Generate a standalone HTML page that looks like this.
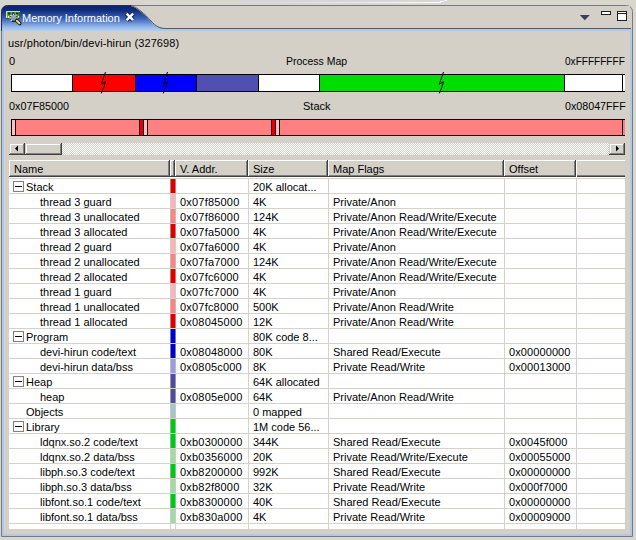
<!DOCTYPE html>
<html><head><meta charset="utf-8"><style>
html,body{margin:0;padding:0;}
body{width:636px;height:540px;position:relative;overflow:hidden;background:#d9d6ce;font-family:"Liberation Sans",sans-serif;font-size:11px;color:#000;}
.a{position:absolute;}
.t{position:absolute;white-space:nowrap;line-height:12px;height:12px;}
</style></head><body>
<svg class="a" style="left:0;top:0" width="636" height="540" viewBox="0 0 636 540">
<defs><linearGradient id="tg" x1="0" y1="0" x2="0" y2="1">
<stop offset="0" stop-color="#0a226a"/><stop offset="0.15" stop-color="#0e2a78"/><stop offset="0.5" stop-color="#3a62b8"/><stop offset="0.85" stop-color="#98bcec"/><stop offset="1" stop-color="#b4d0f0"/></linearGradient>
<linearGradient id="wl" x1="0" y1="0" x2="1" y2="0"><stop offset="0" stop-color="#fff" stop-opacity="0"/><stop offset="0.6" stop-color="#fff" stop-opacity="0.5"/><stop offset="1" stop-color="#fff" stop-opacity="1"/></linearGradient></defs>
<rect x="230" y="2" width="211" height="1" fill="url(#wl)"/><rect x="440" y="1" width="4" height="1" fill="#fff" fill-opacity="0.8"/><rect x="444" y="0" width="3" height="1" fill="#fff" fill-opacity="0.7"/>
<!-- outer frame -->
<path d="M1.5,536.5 L1.5,11.5 A6,6 0 0 1 7.5,5.5 L626.5,5.5 A6,6 0 0 1 632.5,11.5 L632.5,536.5 Z" fill="#d4d0c8" stroke="#767a86" stroke-width="1"/>
<!-- tab gradient -->
<path d="M2,31 L2,11 Q2,6 7,6 L131,6 C137,7.5 145,14.5 151,21.5 C156,27 160,28.5 166,28.5 L630,28 L630,31 Z" fill="url(#tg)"/>
<path d="M131,5.5 C137,7 145,14 151,21 C156,26.5 160,28.5 166,28.5 L631,28.5" fill="none" stroke="#5a5a5a" stroke-width="1"/>
<path d="M164,28 L630,28 L630,6 L131,6 C137,7.5 145,14.5 151,21.5 C156,27 160,28.5 166,28.5 Z" fill="#d4d0c8"/>
<path d="M131,5.5 C137,7 145,14 151,21 C156,26.5 160,28.5 166,28.5 L631,28.5" fill="none" stroke="#5a5a5a" stroke-width="1"/>
<rect x="164" y="29" width="467" height="2" fill="#aecae8"/>
<path d="M1.5,31 L1.5,11.5 A6,6 0 0 1 7.5,5.5 L131,5.5" fill="none" stroke="#0c1c58" stroke-width="1" stroke-opacity="0.8"/>
<!-- light blue inner borders -->
<rect x="2" y="29" width="2" height="507" fill="#aecae8"/>
<rect x="630" y="29" width="2" height="507" fill="#aecae8"/>
<rect x="2" y="534" width="630" height="2" fill="#aecae8"/>
</svg>
<div class="t" style="left:22px;top:12px;color:#fff;">Memory Information</div>
<svg class="a" style="left:124px;top:11px" width="12" height="12" viewBox="0 0 12 12">
<path d="M2.6,2.7 L9.1,9.2 M9.1,2.7 L2.6,9.2" stroke="#0a1a50" stroke-width="4.4"/>
<path d="M2.6,2.7 L9.1,9.2 M9.1,2.7 L2.6,9.2" stroke="#fff" stroke-width="2.6"/>
</svg>
<svg class="a" style="left:0;top:0" width="26" height="28" viewBox="0 0 26 28">
<rect x="6" y="11" width="14" height="8" fill="#5c9c42"/>
<rect x="6" y="11" width="14" height="1" fill="#c4eca0"/>
<rect x="6" y="11" width="1" height="7" fill="#c4eca0"/>
<rect x="19" y="12" width="1" height="7" fill="#2e6a22"/>
<rect x="6" y="18" width="14" height="1" fill="#2e6a22"/>
<rect x="8" y="12.5" width="2.5" height="2" fill="#0e3a10"/>
<rect x="12" y="12.5" width="2.5" height="2" fill="#0e3a10"/>
<rect x="16" y="12.5" width="2.5" height="2" fill="#0e3a10"/>
<rect x="6" y="16" width="1.2" height="2" fill="#f4eca8"/>
<rect x="8" y="16" width="1.2" height="2" fill="#f4eca8"/>
<rect x="18" y="16" width="1.2" height="1.5" fill="#f4eca8"/>
<circle cx="13.6" cy="17.6" r="3.4" fill="#a8b4cc" fill-opacity="0.7" stroke="#e8ecf4" stroke-width="1.1"/>
<circle cx="13.6" cy="17.6" r="3.4" fill="none" stroke="#202838" stroke-width="1.1" stroke-dasharray="1.3 1.4"/>
<path d="M11.8,21.3 L15.4,21.3" stroke="#101420" stroke-width="1.2"/>
<path d="M16.8,20.6 L19.8,23.6" stroke="#181408" stroke-width="3.6" stroke-linecap="round"/>
<path d="M16.9,20.7 L19.5,23.3" stroke="#ecd488" stroke-width="2" stroke-linecap="round"/>
</svg>
<svg class="a" style="left:576px;top:8px" width="56" height="18" viewBox="0 0 56 18">
<path d="M3.8,7 L13.8,7 L8.8,12.3 Z" fill="#3c3c5c"/>
<rect x="25.5" y="3.5" width="9" height="3" fill="#fff" stroke="#202020" stroke-width="1"/>
<rect x="41.5" y="3.5" width="9" height="9" fill="#fff" stroke="#202020" stroke-width="1"/>
<rect x="41" y="5" width="10" height="1" fill="#202020"/>
</svg>
<div class="t" style="left:8px;top:37px;letter-spacing:0.09px;">usr/photon/bin/devi-hirun (327698)</div>
<div class="t" style="left:9px;top:55px;">0</div>
<div class="t" style="left:286px;top:55px;"><span style="display:inline-block;transform:scaleX(0.952);transform-origin:0 0">Process Map</span></div>
<div class="t" style="left:565px;top:55px;"><span style="display:inline-block;transform:scaleX(0.915);transform-origin:0 0">0xFFFFFFFF</span></div>
<svg class="a" style="left:0;top:71px" width="636" height="24" viewBox="0 71 636 24">
<rect x="11" y="74" width="614" height="18" fill="#000"/>
<rect x="12" y="75" width="60" height="16" fill="#fff"/>
<rect x="73" y="75" width="62" height="16" fill="#ff0000"/>
<rect x="136" y="75" width="60" height="16" fill="#0000ff"/>
<rect x="197" y="75" width="61" height="16" fill="#5050b0"/>
<rect x="259" y="75" width="60" height="16" fill="#fff"/>
<rect x="320" y="75" width="244" height="16" fill="#00dd00"/>
<rect x="565" y="75" width="57" height="16" fill="#fff"/>
<rect x="623" y="75" width="2" height="16" fill="#fff"/>
<path d="M105.5,72 L102.5,80.7 L101.3,84.3 L105.5,81.7 L103.7,87.7 L101.3,93.4" fill="none" stroke="#000" stroke-width="1"/>
<path d="M167.5,72 L164.5,80.7 L163.3,84.3 L167.5,81.7 L165.7,87.7 L163.3,93.4" fill="none" stroke="#000" stroke-width="1"/>
<path d="M443.5,72 L440.5,80.7 L439.3,84.3 L443.5,81.7 L441.7,87.7 L439.3,93.4" fill="none" stroke="#000" stroke-width="1"/>
</svg>
<div class="t" style="left:9px;top:100px;"><span style="display:inline-block;transform:scaleX(0.981);transform-origin:0 0">0x07F85000</span></div>
<div class="t" style="left:303px;top:100px;">Stack</div>
<div class="t" style="left:565px;top:100px;"><span style="display:inline-block;transform:scaleX(0.973);transform-origin:0 0">0x08047FFF</span></div>
<svg class="a" style="left:0;top:116px" width="636" height="23" viewBox="0 116 636 23">
<rect x="11" y="119" width="614" height="17" fill="#000"/>
<rect x="12" y="120" width="3" height="15" fill="#ffc0c0"/>
<rect x="16" y="120" width="123" height="15" fill="#ff8080"/>
<rect x="140" y="120" width="3" height="15" fill="#e80000"/>
<rect x="144" y="120" width="3" height="15" fill="#ffc0c0"/>
<rect x="148" y="120" width="123" height="15" fill="#ff8080"/>
<rect x="272" y="120" width="3" height="15" fill="#e80000"/>
<rect x="276" y="120" width="3" height="15" fill="#ffc0c0"/>
<rect x="280" y="120" width="342" height="15" fill="#ff8080"/>
<rect x="623" y="120" width="2" height="15" fill="#ff8080"/>
</svg>
<div class="a" style="left:25px;top:143px;width:584px;height:12px;background-color:#fff;background-image:linear-gradient(45deg,#d4d0c8 25%,transparent 25%,transparent 75%,#d4d0c8 75%),linear-gradient(45deg,#d4d0c8 25%,transparent 25%,transparent 75%,#d4d0c8 75%);background-size:2px 2px;background-position:0 0,1px 1px;"></div>
<div class="a" style="left:9px;top:143px;width:16px;height:12px;background:#d4d0c8;box-shadow:inset -1px -1px 0 #404040, inset 1px 1px 0 #d4d0c8, inset -2px -2px 0 #808080, inset 2px 2px 0 #fff;"></div>
<div class="a" style="left:25px;top:143px;width:37px;height:12px;background:#d4d0c8;box-shadow:inset -1px -1px 0 #404040, inset 1px 1px 0 #d4d0c8, inset -2px -2px 0 #808080, inset 2px 2px 0 #fff;"></div>
<div class="a" style="left:609px;top:143px;width:16px;height:12px;background:#d4d0c8;box-shadow:inset -1px -1px 0 #404040, inset 1px 1px 0 #d4d0c8, inset -2px -2px 0 #808080, inset 2px 2px 0 #fff;"></div>
<svg class="a" style="left:9px;top:143px" width="16" height="12"><path d="M6,5.5 L9,2.5 L9,8.5 Z" fill="#000"/></svg>
<svg class="a" style="left:609px;top:143px" width="16" height="12"><path d="M10,5.5 L7,2.5 L7,8.5 Z" fill="#000"/></svg>
<div class="a" style="left:9px;top:177px;width:616px;height:352px;background:#fff;"></div>
<div class="a" style="left:9px;top:160px;width:161px;height:17px;background:#d4d0c8;box-shadow:inset -1px -1px 0 #404040, inset 1px 1px 0 #fff, inset -2px -2px 0 #808080;"></div>
<div class="a" style="left:170px;top:160px;width:5px;height:17px;background:#d4d0c8;box-shadow:inset -1px -1px 0 #404040, inset 1px 1px 0 #fff, inset -2px -2px 0 #808080;"></div>
<div class="a" style="left:175px;top:160px;width:73px;height:17px;background:#d4d0c8;box-shadow:inset -1px -1px 0 #404040, inset 1px 1px 0 #fff, inset -2px -2px 0 #808080;"></div>
<div class="a" style="left:248px;top:160px;width:80px;height:17px;background:#d4d0c8;box-shadow:inset -1px -1px 0 #404040, inset 1px 1px 0 #fff, inset -2px -2px 0 #808080;"></div>
<div class="a" style="left:328px;top:160px;width:176px;height:17px;background:#d4d0c8;box-shadow:inset -1px -1px 0 #404040, inset 1px 1px 0 #fff, inset -2px -2px 0 #808080;"></div>
<div class="a" style="left:504px;top:160px;width:72px;height:17px;background:#d4d0c8;box-shadow:inset -1px -1px 0 #404040, inset 1px 1px 0 #fff, inset -2px -2px 0 #808080;"></div>
<div class="a" style="left:576px;top:160px;width:49px;height:17px;background:#d4d0c8;box-shadow:inset 1px 1px 0 #fff, inset 0 -1px 0 #404040, inset 0 -2px 0 #808080;"></div>
<div class="t" style="left:14px;top:163px;">Name</div>
<div class="t" style="left:180px;top:163px;">V. Addr.</div>
<div class="t" style="left:253px;top:163px;">Size</div>
<div class="t" style="left:333px;top:163px;">Map Flags</div>
<div class="t" style="left:509px;top:163px;">Offset</div>
<svg class="a" style="left:0;top:0" width="636" height="540" viewBox="0 0 636 540">
<rect x="9" y="178" width="616" height="1" fill="#d4d2ca"/>
<rect x="9" y="193" width="616" height="1" fill="#d4d2ca"/>
<rect x="9" y="208" width="616" height="1" fill="#d4d2ca"/>
<rect x="9" y="223" width="616" height="1" fill="#d4d2ca"/>
<rect x="9" y="238" width="616" height="1" fill="#d4d2ca"/>
<rect x="9" y="253" width="616" height="1" fill="#d4d2ca"/>
<rect x="9" y="268" width="616" height="1" fill="#d4d2ca"/>
<rect x="9" y="283" width="616" height="1" fill="#d4d2ca"/>
<rect x="9" y="298" width="616" height="1" fill="#d4d2ca"/>
<rect x="9" y="313" width="616" height="1" fill="#d4d2ca"/>
<rect x="9" y="328" width="616" height="1" fill="#d4d2ca"/>
<rect x="9" y="343" width="616" height="1" fill="#d4d2ca"/>
<rect x="9" y="358" width="616" height="1" fill="#d4d2ca"/>
<rect x="9" y="373" width="616" height="1" fill="#d4d2ca"/>
<rect x="9" y="388" width="616" height="1" fill="#d4d2ca"/>
<rect x="9" y="403" width="616" height="1" fill="#d4d2ca"/>
<rect x="9" y="418" width="616" height="1" fill="#d4d2ca"/>
<rect x="9" y="433" width="616" height="1" fill="#d4d2ca"/>
<rect x="9" y="448" width="616" height="1" fill="#d4d2ca"/>
<rect x="9" y="463" width="616" height="1" fill="#d4d2ca"/>
<rect x="9" y="478" width="616" height="1" fill="#d4d2ca"/>
<rect x="9" y="493" width="616" height="1" fill="#d4d2ca"/>
<rect x="9" y="508" width="616" height="1" fill="#d4d2ca"/>
<rect x="9" y="523" width="616" height="1" fill="#d4d2ca"/>
<rect x="170" y="178" width="1" height="351" fill="#d4d2ca"/>
<rect x="175" y="178" width="1" height="351" fill="#d4d2ca"/>
<rect x="248" y="178" width="1" height="351" fill="#d4d2ca"/>
<rect x="328" y="178" width="1" height="351" fill="#d4d2ca"/>
<rect x="504" y="178" width="1" height="351" fill="#d4d2ca"/>
<rect x="576" y="178" width="1" height="351" fill="#d4d2ca"/>
<rect x="170" y="179" width="6" height="14" fill="#dc0000" fill-opacity="0.45"/>
<rect x="171" y="179" width="4" height="14" fill="#dc0000"/>
<rect x="13.5" y="181.5" width="10" height="10" fill="#fff" stroke="#808080" stroke-width="1"/>
<rect x="15" y="186" width="7" height="1" fill="#000"/>
<rect x="170" y="194" width="6" height="14" fill="#f2b8b8" fill-opacity="0.45"/>
<rect x="171" y="194" width="4" height="14" fill="#f2b8b8"/>
<rect x="170" y="209" width="6" height="14" fill="#f48686" fill-opacity="0.45"/>
<rect x="171" y="209" width="4" height="14" fill="#f48686"/>
<rect x="170" y="224" width="6" height="14" fill="#dc0000" fill-opacity="0.45"/>
<rect x="171" y="224" width="4" height="14" fill="#dc0000"/>
<rect x="170" y="239" width="6" height="14" fill="#f2b8b8" fill-opacity="0.45"/>
<rect x="171" y="239" width="4" height="14" fill="#f2b8b8"/>
<rect x="170" y="254" width="6" height="14" fill="#f48686" fill-opacity="0.45"/>
<rect x="171" y="254" width="4" height="14" fill="#f48686"/>
<rect x="170" y="269" width="6" height="14" fill="#dc0000" fill-opacity="0.45"/>
<rect x="171" y="269" width="4" height="14" fill="#dc0000"/>
<rect x="170" y="284" width="6" height="14" fill="#f2b8b8" fill-opacity="0.45"/>
<rect x="171" y="284" width="4" height="14" fill="#f2b8b8"/>
<rect x="170" y="299" width="6" height="14" fill="#f48686" fill-opacity="0.45"/>
<rect x="171" y="299" width="4" height="14" fill="#f48686"/>
<rect x="170" y="314" width="6" height="14" fill="#dc0000" fill-opacity="0.45"/>
<rect x="171" y="314" width="4" height="14" fill="#dc0000"/>
<rect x="170" y="329" width="6" height="14" fill="#0000cc" fill-opacity="0.45"/>
<rect x="171" y="329" width="4" height="14" fill="#0000cc"/>
<rect x="13.5" y="331.5" width="10" height="10" fill="#fff" stroke="#808080" stroke-width="1"/>
<rect x="15" y="336" width="7" height="1" fill="#000"/>
<rect x="170" y="344" width="6" height="14" fill="#0000cc" fill-opacity="0.45"/>
<rect x="171" y="344" width="4" height="14" fill="#0000cc"/>
<rect x="170" y="359" width="6" height="14" fill="#9c9ce4" fill-opacity="0.45"/>
<rect x="171" y="359" width="4" height="14" fill="#9c9ce4"/>
<rect x="170" y="374" width="6" height="14" fill="#4e4e9c" fill-opacity="0.45"/>
<rect x="171" y="374" width="4" height="14" fill="#4e4e9c"/>
<rect x="13.5" y="376.5" width="10" height="10" fill="#fff" stroke="#808080" stroke-width="1"/>
<rect x="15" y="381" width="7" height="1" fill="#000"/>
<rect x="170" y="389" width="6" height="14" fill="#4e4e9c" fill-opacity="0.45"/>
<rect x="171" y="389" width="4" height="14" fill="#4e4e9c"/>
<rect x="170" y="404" width="6" height="14" fill="#a4c6ca" fill-opacity="0.45"/>
<rect x="171" y="404" width="4" height="14" fill="#a4c6ca"/>
<rect x="170" y="419" width="6" height="14" fill="#00c818" fill-opacity="0.45"/>
<rect x="171" y="419" width="4" height="14" fill="#00c818"/>
<rect x="13.5" y="421.5" width="10" height="10" fill="#fff" stroke="#808080" stroke-width="1"/>
<rect x="15" y="426" width="7" height="1" fill="#000"/>
<rect x="170" y="434" width="6" height="14" fill="#00c818" fill-opacity="0.45"/>
<rect x="171" y="434" width="4" height="14" fill="#00c818"/>
<rect x="170" y="449" width="6" height="14" fill="#a4d8a4" fill-opacity="0.45"/>
<rect x="171" y="449" width="4" height="14" fill="#a4d8a4"/>
<rect x="170" y="464" width="6" height="14" fill="#00c818" fill-opacity="0.45"/>
<rect x="171" y="464" width="4" height="14" fill="#00c818"/>
<rect x="170" y="479" width="6" height="14" fill="#a4d8a4" fill-opacity="0.45"/>
<rect x="171" y="479" width="4" height="14" fill="#a4d8a4"/>
<rect x="170" y="494" width="6" height="14" fill="#00c818" fill-opacity="0.45"/>
<rect x="171" y="494" width="4" height="14" fill="#00c818"/>
<rect x="170" y="509" width="6" height="14" fill="#a4d8a4" fill-opacity="0.45"/>
<rect x="171" y="509" width="4" height="14" fill="#a4d8a4"/>
</svg>
<div class="t" style="left:26px;top:181px;">Stack</div>
<div class="t" style="left:253px;top:181px;">20K allocat...</div>
<div class="t" style="left:40px;top:196px;">thread 3 guard</div>
<div class="t" style="left:180px;top:196px;letter-spacing:0.2px;">0x07f85000</div>
<div class="t" style="left:253px;top:196px;">4K</div>
<div class="t" style="left:333px;top:196px;">Private/Anon</div>
<div class="t" style="left:40px;top:211px;">thread 3 unallocated</div>
<div class="t" style="left:180px;top:211px;letter-spacing:0.2px;">0x07f86000</div>
<div class="t" style="left:253px;top:211px;">124K</div>
<div class="t" style="left:333px;top:211px;">Private/Anon Read/Write/Execute</div>
<div class="t" style="left:40px;top:226px;">thread 3 allocated</div>
<div class="t" style="left:180px;top:226px;letter-spacing:0.2px;">0x07fa5000</div>
<div class="t" style="left:253px;top:226px;">4K</div>
<div class="t" style="left:333px;top:226px;">Private/Anon Read/Write/Execute</div>
<div class="t" style="left:40px;top:241px;">thread 2 guard</div>
<div class="t" style="left:180px;top:241px;letter-spacing:0.2px;">0x07fa6000</div>
<div class="t" style="left:253px;top:241px;">4K</div>
<div class="t" style="left:333px;top:241px;">Private/Anon</div>
<div class="t" style="left:40px;top:256px;">thread 2 unallocated</div>
<div class="t" style="left:180px;top:256px;letter-spacing:0.2px;">0x07fa7000</div>
<div class="t" style="left:253px;top:256px;">124K</div>
<div class="t" style="left:333px;top:256px;">Private/Anon Read/Write/Execute</div>
<div class="t" style="left:40px;top:271px;">thread 2 allocated</div>
<div class="t" style="left:180px;top:271px;letter-spacing:0.2px;">0x07fc6000</div>
<div class="t" style="left:253px;top:271px;">4K</div>
<div class="t" style="left:333px;top:271px;">Private/Anon Read/Write/Execute</div>
<div class="t" style="left:40px;top:286px;">thread 1 guard</div>
<div class="t" style="left:180px;top:286px;letter-spacing:0.2px;">0x07fc7000</div>
<div class="t" style="left:253px;top:286px;">4K</div>
<div class="t" style="left:333px;top:286px;">Private/Anon</div>
<div class="t" style="left:40px;top:301px;">thread 1 unallocated</div>
<div class="t" style="left:180px;top:301px;letter-spacing:0.2px;">0x07fc8000</div>
<div class="t" style="left:253px;top:301px;">500K</div>
<div class="t" style="left:333px;top:301px;">Private/Anon Read/Write</div>
<div class="t" style="left:40px;top:316px;">thread 1 allocated</div>
<div class="t" style="left:180px;top:316px;letter-spacing:0.2px;">0x08045000</div>
<div class="t" style="left:253px;top:316px;">12K</div>
<div class="t" style="left:333px;top:316px;">Private/Anon Read/Write</div>
<div class="t" style="left:26px;top:331px;">Program</div>
<div class="t" style="left:253px;top:331px;">80K code 8...</div>
<div class="t" style="left:40px;top:346px;">devi-hirun code/text</div>
<div class="t" style="left:180px;top:346px;letter-spacing:0.2px;">0x08048000</div>
<div class="t" style="left:253px;top:346px;">80K</div>
<div class="t" style="left:333px;top:346px;">Shared Read/Execute</div>
<div class="t" style="left:509px;top:346px;letter-spacing:0.1px;">0x00000000</div>
<div class="t" style="left:40px;top:361px;">devi-hirun data/bss</div>
<div class="t" style="left:180px;top:361px;letter-spacing:0.2px;">0x0805c000</div>
<div class="t" style="left:253px;top:361px;">8K</div>
<div class="t" style="left:333px;top:361px;">Private Read/Write</div>
<div class="t" style="left:509px;top:361px;letter-spacing:0.1px;">0x00013000</div>
<div class="t" style="left:26px;top:376px;">Heap</div>
<div class="t" style="left:253px;top:376px;">64K allocated</div>
<div class="t" style="left:40px;top:391px;">heap</div>
<div class="t" style="left:180px;top:391px;letter-spacing:0.2px;">0x0805e000</div>
<div class="t" style="left:253px;top:391px;">64K</div>
<div class="t" style="left:333px;top:391px;">Private/Anon Read/Write</div>
<div class="t" style="left:26px;top:406px;">Objects</div>
<div class="t" style="left:253px;top:406px;">0 mapped</div>
<div class="t" style="left:26px;top:421px;">Library</div>
<div class="t" style="left:253px;top:421px;">1M code 56...</div>
<div class="t" style="left:40px;top:436px;">ldqnx.so.2 code/text</div>
<div class="t" style="left:180px;top:436px;letter-spacing:0.2px;">0xb0300000</div>
<div class="t" style="left:253px;top:436px;">344K</div>
<div class="t" style="left:333px;top:436px;">Shared Read/Execute</div>
<div class="t" style="left:509px;top:436px;letter-spacing:0.1px;">0x0045f000</div>
<div class="t" style="left:40px;top:451px;">ldqnx.so.2 data/bss</div>
<div class="t" style="left:180px;top:451px;letter-spacing:0.2px;">0xb0356000</div>
<div class="t" style="left:253px;top:451px;">20K</div>
<div class="t" style="left:333px;top:451px;">Private Read/Write/Execute</div>
<div class="t" style="left:509px;top:451px;letter-spacing:0.1px;">0x00055000</div>
<div class="t" style="left:40px;top:466px;">libph.so.3 code/text</div>
<div class="t" style="left:180px;top:466px;letter-spacing:0.2px;">0xb8200000</div>
<div class="t" style="left:253px;top:466px;">992K</div>
<div class="t" style="left:333px;top:466px;">Shared Read/Execute</div>
<div class="t" style="left:509px;top:466px;letter-spacing:0.1px;">0x00000000</div>
<div class="t" style="left:40px;top:481px;">libph.so.3 data/bss</div>
<div class="t" style="left:180px;top:481px;letter-spacing:0.2px;">0xb82f8000</div>
<div class="t" style="left:253px;top:481px;">32K</div>
<div class="t" style="left:333px;top:481px;">Private Read/Write</div>
<div class="t" style="left:509px;top:481px;letter-spacing:0.1px;">0x000f7000</div>
<div class="t" style="left:40px;top:496px;">libfont.so.1 code/text</div>
<div class="t" style="left:180px;top:496px;letter-spacing:0.2px;">0xb8300000</div>
<div class="t" style="left:253px;top:496px;">40K</div>
<div class="t" style="left:333px;top:496px;">Shared Read/Execute</div>
<div class="t" style="left:509px;top:496px;letter-spacing:0.1px;">0x00000000</div>
<div class="t" style="left:40px;top:511px;">libfont.so.1 data/bss</div>
<div class="t" style="left:180px;top:511px;letter-spacing:0.2px;">0xb830a000</div>
<div class="t" style="left:253px;top:511px;">4K</div>
<div class="t" style="left:333px;top:511px;">Private Read/Write</div>
<div class="t" style="left:509px;top:511px;letter-spacing:0.1px;">0x00009000</div>
</body></html>
